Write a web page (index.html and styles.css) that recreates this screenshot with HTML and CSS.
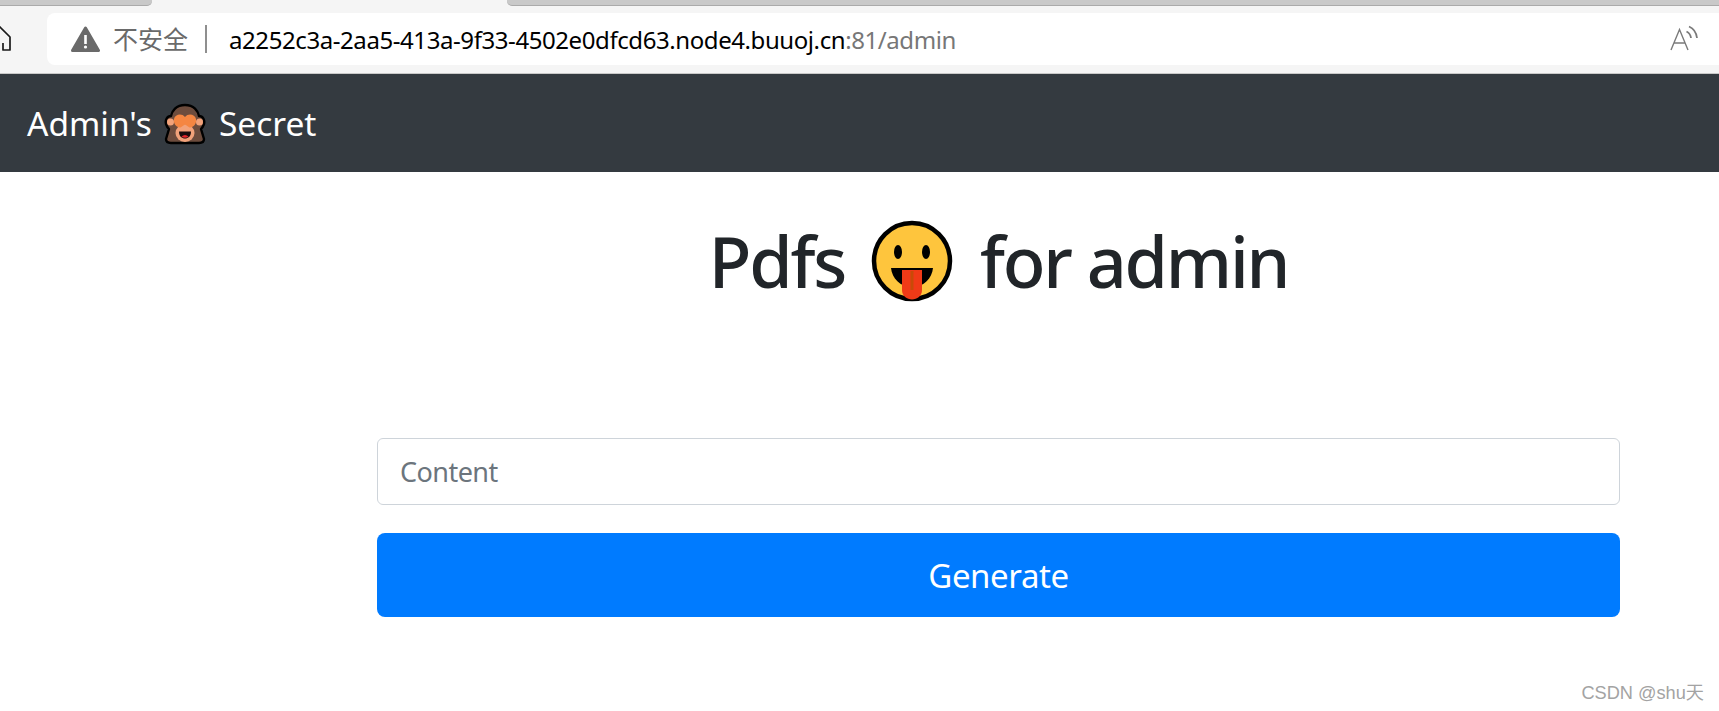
FILE: index.html
```html
<!DOCTYPE html>
<html lang="en">
<head>
<meta charset="utf-8">
<title>Admin's Secret</title>
<link rel="stylesheet" href="styles.css">
</head>
<body>
<header class="chrome">
  <div class="tabs">
    <div class="tab tab-left"></div>
    <div class="tab tab-right"></div>
  </div>
  <div class="toolbar">
    <svg class="home" width="12" height="28" viewBox="0 0 12 28"><path d="M-8 12 L0 2 L10 12 V25 H3 V18" fill="none" stroke="#1a1a1a" stroke-width="1.700" stroke-linejoin="round"/></svg>
    <div class="address">
      <svg class="warn" width="29" height="27" viewBox="0 0 29 27"><path d="M14.5 2 L27.500 24.500 H1.500 Z" fill="#6a6a6a" stroke="#6a6a6a" stroke-width="3" stroke-linejoin="round"/><rect x="13.2" y="9" width="2.6" height="9" fill="#fff"/><circle cx="14.5" cy="21" r="1.6" fill="#fff"/></svg>
      <span class="insecure">不安全</span>
      <span class="divider"></span>
      <span class="url">a2252c3a-2aa5-413a-9f33-4502e0dfcd63.node4.buuoj.cn<span class="url-rest">:81/admin</span></span>
      <svg class="read" width="28" height="28" viewBox="0 0 28 28"><path d="M1 25 L9.5 4.5 L18 25 M4 18 H15" fill="none" stroke="#7a7a7a" stroke-width="1.4"/><path d="M16.5 6.5 Q20.5 8.5 21 13 M19 1.5 Q26 4.5 27 13" fill="none" stroke="#7a7a7a" stroke-width="1.8"/></svg>
    </div>
  </div>
</header>
<nav class="navbar">
  <span class="brand">
    <span>Admin's</span>
    <svg class="emoji monkey" width="42" height="42" viewBox="0 0 42 42">
      <path d="M21 2 C12 2 8 8 7 13 C3 13 1 17 2 21 C3 24 4 25 5 26 L2 36 C2 39 4 40 7 40 L35 40 C38 40 40 39 40 36 L37 26 C38 25 39 24 40 21 C41 17 39 13 35 13 C34 8 30 2 21 2 Z" fill="#6d4c3d" stroke="#000" stroke-width="2.4" stroke-linejoin="round"/>
      <circle cx="6.500" cy="19" r="3.500" fill="#f2a27a"/><circle cx="35.500" cy="19" r="3.500" fill="#f2a27a"/>
      <ellipse cx="21" cy="30" rx="9.500" ry="9" fill="#f2a27a"/>
      <path d="M15 28.500 H27 C27 33.500 24 35.500 21 35.500 C18 35.500 15 33.500 15 28.500 Z" fill="#1a0d0d"/>
      <path d="M17.500 33.500 Q21 30.500 24.500 33.500 Q21 36 17.500 33.500 Z" fill="#e5262b"/>
      <path d="M10 16 C11 11 18 10 21 14 C24 10 31 11 32 16 C33 21 29 25 25.500 24.500 L21 21.500 L16.500 24.500 C13 25 9 21 10 16 Z" fill="#f58642"/>
    </svg>
    <span>Secret</span>
  </span>
</nav>
<main class="page">
  <h1 class="title">
    <span>Pdfs</span>
    <svg class="emoji tongue" width="82" height="82" viewBox="0 0 82 82">
      <circle cx="41" cy="41" r="38" fill="#fec53d" stroke="#000" stroke-width="4.500"/>
      <ellipse cx="27" cy="32" rx="4" ry="7" fill="#000"/>
      <ellipse cx="55" cy="32" rx="4" ry="7" fill="#000"/>
      <path d="M20 48 H62 C61 58 53 67 41 67 C29 67 21 58 20 48 Z" fill="#000"/>
      <path d="M31 50 H51 V70 C51 76 46 79.500 41 79.500 C36 79.500 31 76 31 70 Z" fill="#f03a17"/>
      <rect x="39.500" y="51" width="3" height="19" fill="#c84a08"/>
    </svg>
    <span>for admin</span>
  </h1>
  <form class="form">
    <input class="field" type="text" placeholder="Content">
    <button class="submit" type="button">Generate</button>
  </form>
</main>
<footer class="mark">CSDN @shu天</footer>
</body>
</html>
```

FILE: styles.css
```css
* { box-sizing: border-box; }
html, body { margin: 0; height: 100%; }
body {
  width: 1719px;
  height: 711px;
  overflow: hidden;
  background: #fff;
  font-family: "Noto Sans", "Noto Sans CJK SC", sans-serif;
  display: flex;
  flex-direction: column;
}
.chrome {
  height: 74px;
  background: #f5f5f5;
  border-bottom: 1px solid #c9c9c9;
  flex: none;
}
.tabs {
  display: flex;
  justify-content: space-between;
  height: 6px;
}
.tab {
  height: 6px;
  background: #c9c9c9;
  border-bottom: 1px solid #aaa;
}
.tab-left { width: 152px; border-bottom-right-radius: 5px; }
.tab-right { width: 1212px; border-bottom-left-radius: 5px; }
.toolbar {
  display: flex;
  align-items: center;
  height: 52px;
  margin-top: 7px;
}
.home { flex: none; margin-right: 35px; }
.address {
  flex: 1;
  height: 52px;
  background: #fff;
  border-radius: 8px 0 0 8px;
  display: flex;
  align-items: center;
  padding-left: 24px;
}
.warn { flex: none; margin-right: 13px; }
.insecure { color: #6a6a6a; font-size: 25px; line-height: 1; width: 77px; flex: none; }
.divider { width: 2px; height: 28px; background: #8f8f8f; margin: 0 22px 0 15px; flex: none; }
.url { color: #000; font-size: 24px; white-space: nowrap; letter-spacing: -0.42px; flex: 1; }
.url-rest { color: #777; }
.read { flex: none; margin-right: 21px; }
.navbar {
  height: 98px;
  background: #343a40;
  flex: none;
  display: flex;
  align-items: center;
  padding-left: 27px;
}
.brand { color: #fff; font-size: 33.500px; letter-spacing: 0; display: flex; align-items: center; white-space: nowrap; }
.monkey { margin: 2px 13px 0 12px; }
.page {
  flex: 1;
  padding: 0 99px 0 377px;
}
.title {
  margin: 37px 0 0;
  height: 104px;
  display: flex;
  justify-content: center;
  align-items: center;
  color: #212529;
  font-size: 70px;
  font-weight: 500;
  letter-spacing: -2.2px;
  line-height: 1;
}
.tongue { margin: 0 27px 0 26px; }
.form {
  margin-top: 125px;
  display: flex;
  flex-direction: column;
  gap: 28px;
}
.field {
  height: 67px;
  border: 1px solid #ced4da;
  border-radius: 6px;
  padding: 0 22px;
  font: 27px "Noto Sans", sans-serif;
  letter-spacing: -0.55px;
  color: #495057;
  outline: none;
}
.field::placeholder { color: #6c757d; opacity: 1; }
.submit {
  height: 84px;
  border: 0;
  border-radius: 8px;
  background: #007bff;
  color: #fff;
  font: 33px "Noto Sans", sans-serif;
  letter-spacing: -0.4px;
}
.mark {
  flex: none;
  height: 40px;
  padding: 9px 15px 0 0;
  text-align: right;
  color: #a3a3a3;
  font: 18.200px "Liberation Sans", "Noto Sans CJK SC", sans-serif;
  line-height: 26px;
}
```
